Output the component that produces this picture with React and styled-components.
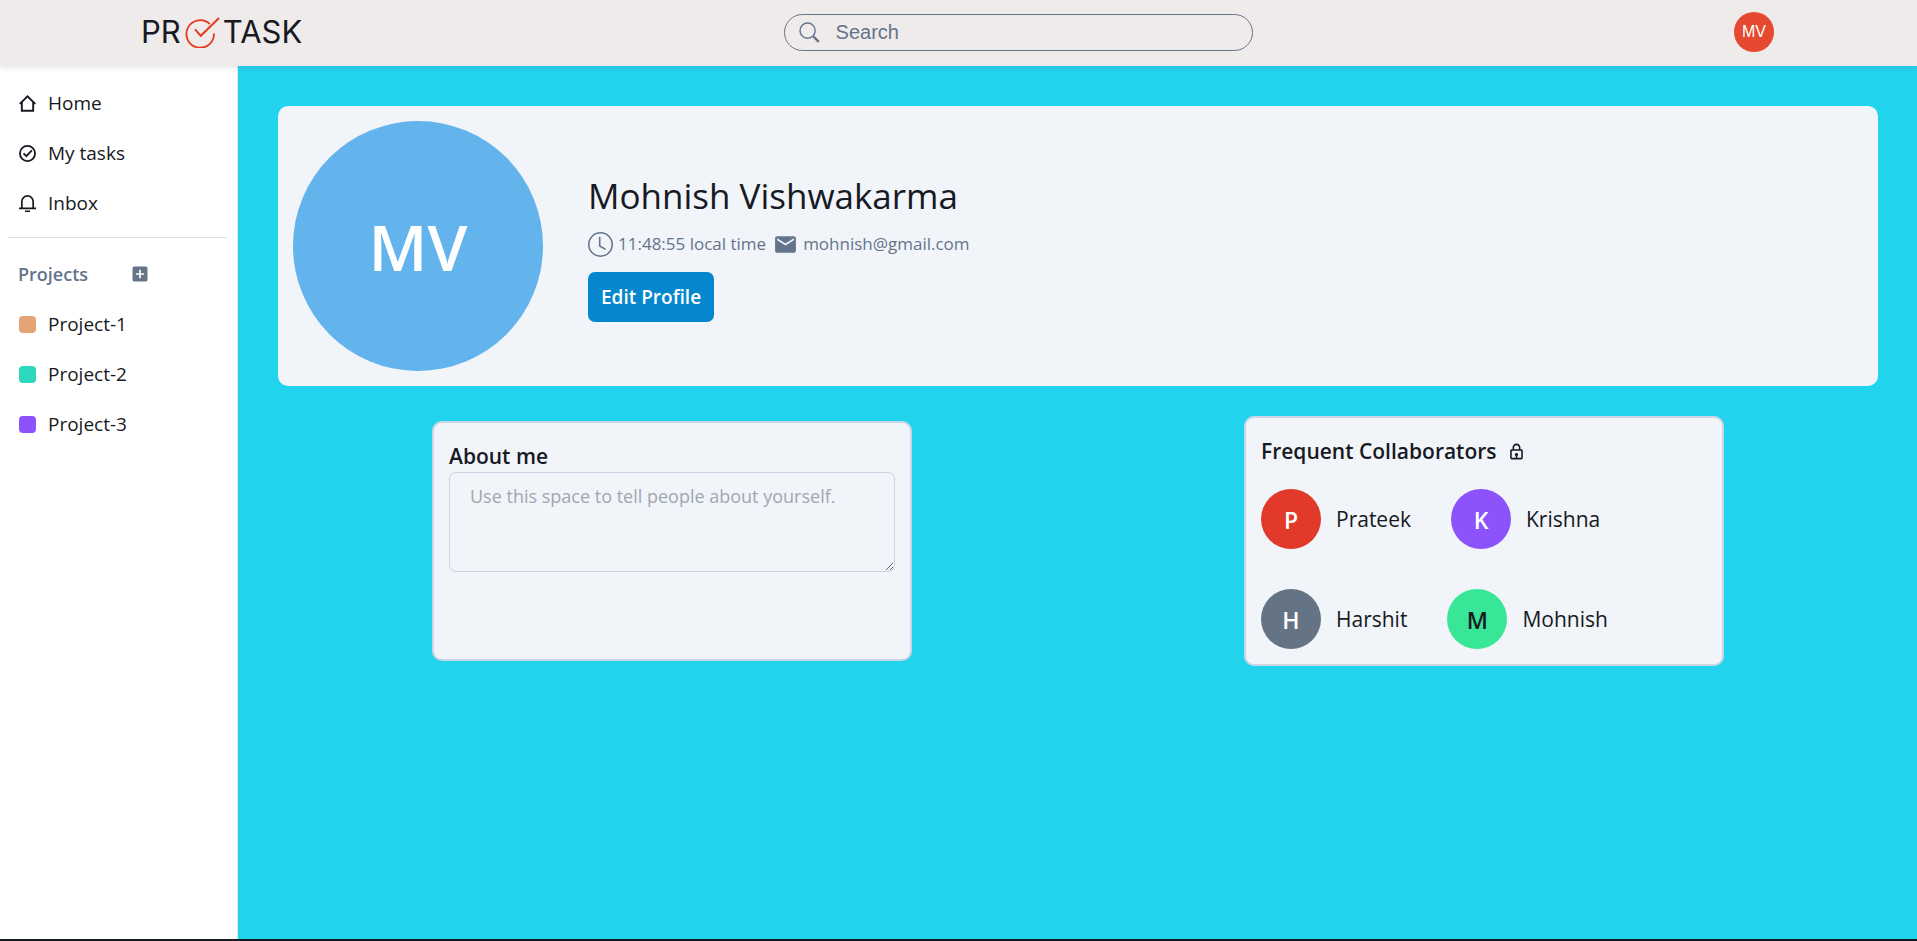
import React from "react";
import styled, { createGlobalStyle } from "styled-components";
import { BsClock } from "react-icons/bs";
import { MdAddBox, MdEmail } from "react-icons/md";
import { BiLock } from "react-icons/bi";

const ink = "#171923";
const slate = "#64748b";

const GlobalStyle = createGlobalStyle`
  *, *::before, *::after { box-sizing: border-box; }
  body {
    margin: 0;
    background: ${ink};
    color: ${ink};
    font-family: "Segoe UI", "Open Sans", "Noto Sans", sans-serif;
    font-size: 19px;
    line-height: 30px;
  }
  h1, h2, p, ul { margin: 0; padding: 0; }
  ul { list-style: none; }
  button, input, textarea { font: inherit; }
  svg { display: block; flex: none; }
`;

const Page = styled.div`
  display: flex;
  flex-direction: column;
  min-height: 100vh;
  border-bottom: 2px solid ${ink};
`;

const Header = styled.header`
  position: relative;
  display: flex;
  align-items: center;
  justify-content: space-between;
  height: 66px;
  padding: 0 143px 2px 141px;
  background: #efebea;
  box-shadow: 0 1px 5px rgba(80, 80, 140, 0.2);
`;

const Logo = styled.a`
  display: flex;
  align-items: center;
  color: ${ink};
  font-family: Inter, sans-serif;
  font-size: 31px;
  text-decoration: none;
`;

const SearchBox = styled.label`
  display: flex;
  align-items: center;
  gap: 16px;
  width: 469px;
  height: 37px;
  padding: 0 14px;
  border: 1px solid ${slate};
  border-radius: 19px;
  color: ${slate};
`;

const SearchInput = styled.input`
  flex: 1;
  min-width: 0;
  padding: 0;
  border: 0;
  outline: 0;
  background: transparent;
  color: ${ink};
  font-family: "Liberation Sans", Arial, sans-serif;
  font-size: 20px;
  line-height: 24px;
  &::placeholder { color: ${slate}; opacity: 1; }
`;

const UserButton = styled.button`
  width: 40px;
  height: 40px;
  padding: 0;
  border: 0;
  border-radius: 50%;
  background: #e5492f;
  color: #fff;
  font-family: "Liberation Sans", Arial, sans-serif;
  font-size: 16px;
`;

const Body = styled.div`
  display: flex;
  flex: 1;
`;

const Sidebar = styled.nav`
  flex: none;
  width: 238px;
  padding: 12px 10px 0 8px;
  border-right: 1px solid #e2e8f0;
  background: #fff;
`;

const NavLink = styled.a`
  display: flex;
  align-items: center;
  gap: 12px;
  height: 50px;
  padding: 0 11px;
  color: ${ink};
  text-decoration: none;
`;

const Divider = styled.hr`
  height: 1px;
  margin: 9px 0 11px;
  border: 0;
  background: #d9e1ea;
`;

const ProjectsHead = styled.div`
  display: flex;
  align-items: center;
  gap: 42px;
  height: 50px;
  padding: 0 10px;
  color: ${slate};
`;

const ProjectsTitle = styled.h2`
  font-size: 18px;
  font-weight: 600;
`;

const AddButton = styled.button`
  padding: 0;
  border: 0;
  background: none;
  color: #667487;
`;

const Swatch = styled.span`
  width: 17px;
  height: 17px;
  border-radius: 4px;
  background: ${(p) => p.$color};
`;

const Main = styled.main`
  display: flex;
  flex: 1;
  flex-direction: column;
  gap: 30px;
  min-width: 0;
  padding: 40px 39px 40px 40px;
  background: #22d3ee;
`;

const Profile = styled.section`
  display: flex;
  align-items: center;
  gap: 45px;
  padding: 15px;
  border-radius: 10px;
  background: #f1f4f9;
`;

const Avatar = styled.div`
  display: flex;
  flex: none;
  align-items: center;
  justify-content: center;
  width: ${(p) => p.$size};
  height: ${(p) => p.$size};
  padding-top: 2px;
  border-radius: 50%;
  background: ${(p) => p.$bg};
  color: ${(p) => p.$fg || "#fff"};
  font-size: ${(p) => p.$font};
  font-weight: 600;
`;

const ProfileInfo = styled.div`
  display: flex;
  flex-direction: column;
  align-items: flex-start;
  padding-top: 2px;
`;

const Name = styled.h1`
  margin-bottom: 6px;
  font-size: 35px;
  font-weight: 400;
  line-height: 48px;
`;

const Meta = styled.div`
  display: flex;
  align-items: center;
  gap: 7px;
  height: 36px;
  margin-bottom: 10px;
  color: ${slate};
  font-size: 17px;
`;

const MetaItem = styled.span`
  display: flex;
  align-items: center;
  gap: 5px;
`;

const EditButton = styled.button`
  height: 50px;
  padding: 0 13px;
  border: 0;
  border-radius: 7px;
  background: #0587cf;
  color: #fff;
  font-size: 19px;
  font-weight: 600;
`;

const Cards = styled.div`
  display: flex;
  align-items: center;
  justify-content: space-between;
  gap: 30px;
  padding: 0 154px;
`;

const Card = styled.section`
  flex: 0 1 480px;
  min-width: 0;
  min-height: 240px;
  padding: 17px 15px 15px;
  border: 2px solid #cbd5e5;
  border-radius: 10px;
  background: #f1f4f9;
`;

const CardTitle = styled.h2`
  display: flex;
  align-items: center;
  gap: 10px;
  font-size: 21px;
  font-weight: 600;
  line-height: 32px;
`;

const AboutInput = styled.textarea`
  display: block;
  width: 100%;
  height: 100px;
  padding: 9px 20px;
  border: 1px solid #cbd5e5;
  border-radius: 7px;
  outline: 0;
  background: transparent;
  color: ${ink};
  font-size: 18px;
  line-height: 28px;
  resize: vertical;
  &::placeholder { color: #a0a8b3; opacity: 1; }
`;

const People = styled.ul`
  display: flex;
  flex-direction: column;
  gap: 40px;
  margin-top: 22px;
`;

const PeopleRow = styled.li`
  display: flex;
  gap: 40px;
`;

const Person = styled.div`
  display: flex;
  align-items: center;
  gap: 15px;
  font-size: 21px;
`;

const Stroke = ({ width, children }) => (
  <svg
    width="17"
    height="17"
    viewBox="0 0 18 18"
    fill="none"
    stroke="currentColor"
    strokeWidth={width}
    aria-hidden="true"
  >
    {children}
  </svg>
);

const HomeIcon = () => (
  <Stroke width={2}>
    <path d="M.8 9.4 9 1.5l8.2 7.9M3 7.8v8.9h12V7.8" />
  </Stroke>
);

const TasksIcon = () => (
  <Stroke width={1.9}>
    <circle cx="9" cy="9" r="8" />
    <path d="m4.8 8.8 3 3 5.8-6" />
  </Stroke>
);

const BellIcon = () => (
  <Stroke width={1.8}>
    <path d="M3 14V7a6 6 0 0 1 12 0v7M0 14.2h18M6.3 17.2h5.4" />
  </Stroke>
);

const SearchIcon = () => (
  <svg width="21" height="21" viewBox="0 0 21 21" fill="none" stroke="currentColor" aria-hidden="true">
    <circle cx="8.6" cy="8.6" r="7.6" strokeWidth="1.4" />
    <path d="m14 14 1.4 1.4" strokeWidth="1.4" />
    <path d="m14.8 14.8 5 5" strokeWidth="2.4" />
  </svg>
);

const LogoMark = () => (
  <svg width="42" height="32" viewBox="0 0 42 32" fill="none" stroke="#e5391f" strokeWidth="1.8" aria-hidden="true">
    <path d="M28.8 8A13.8 13.8 0 1 0 33 17.4" />
    <path d="m14 13.4 5.8 6.4L38 2" strokeWidth="2" />
  </svg>
);

const navItems = [
  ["Home", HomeIcon],
  ["My tasks", TasksIcon],
  ["Inbox", BellIcon],
];

const projects = [
  ["Project-1", "#e5a478"],
  ["Project-2", "#2dd9bd"],
  ["Project-3", "#8c52fb"],
];

const people = [
  [
    { name: "Prateek", bg: "#e23a2a" },
    { name: "Krishna", bg: "#8c52fb" },
  ],
  [
    { name: "Harshit", bg: "#647485" },
    { name: "Mohnish", bg: "#38e698", fg: ink },
  ],
];

export default function App() {
  return (
    <>
      <GlobalStyle />
      <Page>
        <Header>
          <Logo href="#" aria-label="ProTask">
            <span>PR</span>
            <LogoMark />
            <span>TASK</span>
          </Logo>
          <SearchBox>
            <SearchIcon />
            <SearchInput type="text" placeholder="Search" aria-label="Search" />
          </SearchBox>
          <UserButton type="button">MV</UserButton>
        </Header>
        <Body>
          <Sidebar>
            {navItems.map(([label, Icon]) => (
              <NavLink href="#" key={label}>
                <Icon />
                {label}
              </NavLink>
            ))}
            <Divider />
            <ProjectsHead>
              <ProjectsTitle>Projects</ProjectsTitle>
              <AddButton type="button" aria-label="Add project">
                <MdAddBox size={20} />
              </AddButton>
            </ProjectsHead>
            {projects.map(([label, color]) => (
              <NavLink href="#" key={label}>
                <Swatch $color={color} />
                {label}
              </NavLink>
            ))}
          </Sidebar>
          <Main>
            <Profile>
              <Avatar $size="250px" $bg="#63b3ed" $font="64px">MV</Avatar>
              <ProfileInfo>
                <Name>Mohnish Vishwakarma</Name>
                <Meta>
                  <MetaItem>
                    <BsClock size={25} />
                    11:48:55 local time
                  </MetaItem>
                  <MetaItem>
                    <MdEmail size={25} />
                    mohnish@gmail.com
                  </MetaItem>
                </Meta>
                <EditButton type="button">Edit Profile</EditButton>
              </ProfileInfo>
            </Profile>
            <Cards>
              <Card>
                <CardTitle>
                  <label htmlFor="about">About me</label>
                </CardTitle>
                <AboutInput id="about" placeholder="Use this space to tell people about yourself." />
              </Card>
              <Card>
                <CardTitle>
                  Frequent Collaborators
                  <BiLock size={19} />
                </CardTitle>
                <People>
                  {people.map((row) => (
                    <PeopleRow key={row[0].name}>
                      {row.map(({ name, bg, fg }) => (
                        <Person key={name}>
                          <Avatar $size="60px" $bg={bg} $fg={fg} $font="23px">{name[0]}</Avatar>
                          {name}
                        </Person>
                      ))}
                    </PeopleRow>
                  ))}
                </People>
              </Card>
            </Cards>
          </Main>
        </Body>
      </Page>
    </>
  );
}
